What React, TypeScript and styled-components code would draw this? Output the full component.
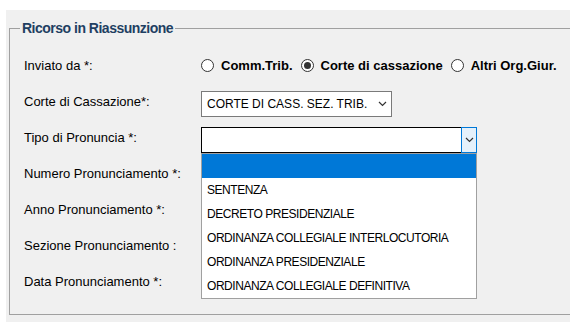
import React from "react";
import styled, { createGlobalStyle } from "styled-components";

const GlobalStyle = createGlobalStyle`
  body {
    margin: 0;
    background: #ffffff;
    font-family: "Liberation Sans", Arial, sans-serif;
  }
`;

const Panel = styled.div`
  margin: 10px 0 0 6px;
  width: 564px;
  height: 312px;
  box-sizing: border-box;
  padding: 10px 0 7px 3px;
  background: #f0f0f0;
  overflow: hidden;
`;

const Frame = styled.fieldset`
  margin: 0;
  height: 100%;
  box-sizing: border-box;
  padding: 11px 0 0 14px;
  border: 1px solid #a0a0a0;
  border-right: none;
  position: relative;
`;

const Legend = styled.legend`
  margin-left: -4px;
  padding: 0 2px;
  font-size: 14px;
  font-weight: bold;
  letter-spacing: -0.5px;
  color: #1f3f62;
  line-height: 16px;
`;

const Form = styled.div`
  display: grid;
  grid-template-columns: 177px 1fr;
  grid-auto-rows: 36px;
  align-items: center;
`;

const Label = styled.div`
  font-size: 13px;
  color: #000;
`;

const RadioGroup = styled.div`
  display: flex;
  align-items: center;
  gap: 8px;
`;

const RadioItem = styled.label`
  display: flex;
  align-items: center;
  gap: 7px;
  font-size: 13px;
  font-weight: bold;
  color: #000;
`;

const Circle = styled.span<{ $checked?: boolean }>`
  width: 13px;
  height: 13px;
  box-sizing: border-box;
  border: 1px solid #333;
  border-radius: 50%;
  background: #fff;
  display: flex;
  align-items: center;
  justify-content: center;
  &::after {
    content: "";
    width: 7px;
    height: 7px;
    border-radius: 50%;
    background: ${(p) => (p.$checked ? "#333" : "transparent")};
  }
`;

const SelectBox = styled.div<{ $width: number; $open?: boolean }>`
  width: ${(p) => p.$width}px;
  height: 26px;
  margin-top: 6px;
  box-sizing: border-box;
  border: 1px solid ${(p) => (p.$open ? "#000" : "#7a7a7a")};
  background: #fff;
  display: flex;
  align-items: center;
  font-size: 12px;
  color: #000;
  position: relative;
`;

const SelectText = styled.span`
  flex: 1;
  padding-left: 5px;
  white-space: nowrap;
`;

const Arrow = styled.span<{ $open?: boolean }>`
  width: ${(p) => (p.$open ? "16px" : "18px")};
  align-self: stretch;
  display: flex;
  align-items: center;
  justify-content: center;
  box-sizing: border-box;
  ${(p) =>
    p.$open &&
    `
    margin: -1px -1px -1px 0;
    border: 1px solid #0078d7;
    background: #e5f1fb;
  `}
`;

const List = styled.ul`
  position: absolute;
  top: 25px;
  left: -1px;
  width: 276px;
  margin: 0;
  padding: 0;
  list-style: none;
  box-sizing: border-box;
  border: 1px solid #a0a0a0;
  background: #fff;
  z-index: 2;
`;

const Option = styled.li<{ $active?: boolean }>`
  height: 24px;
  line-height: 24px;
  padding-left: 5px;
  font-size: 12px;
  letter-spacing: -0.45px;
  color: ${(p) => (p.$active ? "#fff" : "#000")};
  background: ${(p) => (p.$active ? "#0078d7" : "transparent")};
  white-space: nowrap;
`;

const TextField = styled.div`
  width: 150px;
  height: 22px;
  border: 1px solid #7a7a7a;
  background: #fff;
`;

const Chevron = () => (
  <svg width="9" height="6" viewBox="0 0 9 6">
    <path d="M1 1 L4.5 4.5 L8 1" fill="none" stroke="#333" strokeWidth="1.2" />
  </svg>
);

const options = [
  "",
  "SENTENZA",
  "DECRETO PRESIDENZIALE",
  "ORDINANZA COLLEGIALE INTERLOCUTORIA",
  "ORDINANZA PRESIDENZIALE",
  "ORDINANZA COLLEGIALE DEFINITIVA",
];

export default function App() {
  return (
    <>
      <GlobalStyle />
      <Panel>
        <Frame>
          <Legend>Ricorso in Riassunzione</Legend>
          <Form>
            <Label>Inviato da *:</Label>
            <RadioGroup>
              <RadioItem>
                <Circle />
                Comm.Trib.
              </RadioItem>
              <RadioItem>
                <Circle $checked />
                Corte di cassazione
              </RadioItem>
              <RadioItem>
                <Circle />
                Altri Org.Giur.
              </RadioItem>
            </RadioGroup>

            <Label>Corte di Cassazione*:</Label>
            <SelectBox $width={191}>
              <SelectText>CORTE DI CASS. SEZ. TRIB.</SelectText>
              <Arrow>
                <Chevron />
              </Arrow>
            </SelectBox>

            <Label>Tipo di Pronuncia *:</Label>
            <SelectBox $width={276} $open>
              <SelectText />
              <Arrow $open>
                <Chevron />
              </Arrow>
              <List>
                {options.map((o, i) => (
                  <Option key={i} $active={i === 0}>
                    {o}
                  </Option>
                ))}
              </List>
            </SelectBox>

            <Label>Numero Pronunciamento *:</Label>
            <TextField />
            <Label>Anno Pronunciamento *:</Label>
            <TextField />
            <Label>Sezione Pronunciamento :</Label>
            <TextField />
            <Label>Data Pronunciamento *:</Label>
            <TextField />
          </Form>
        </Frame>
      </Panel>
    </>
  );
}
